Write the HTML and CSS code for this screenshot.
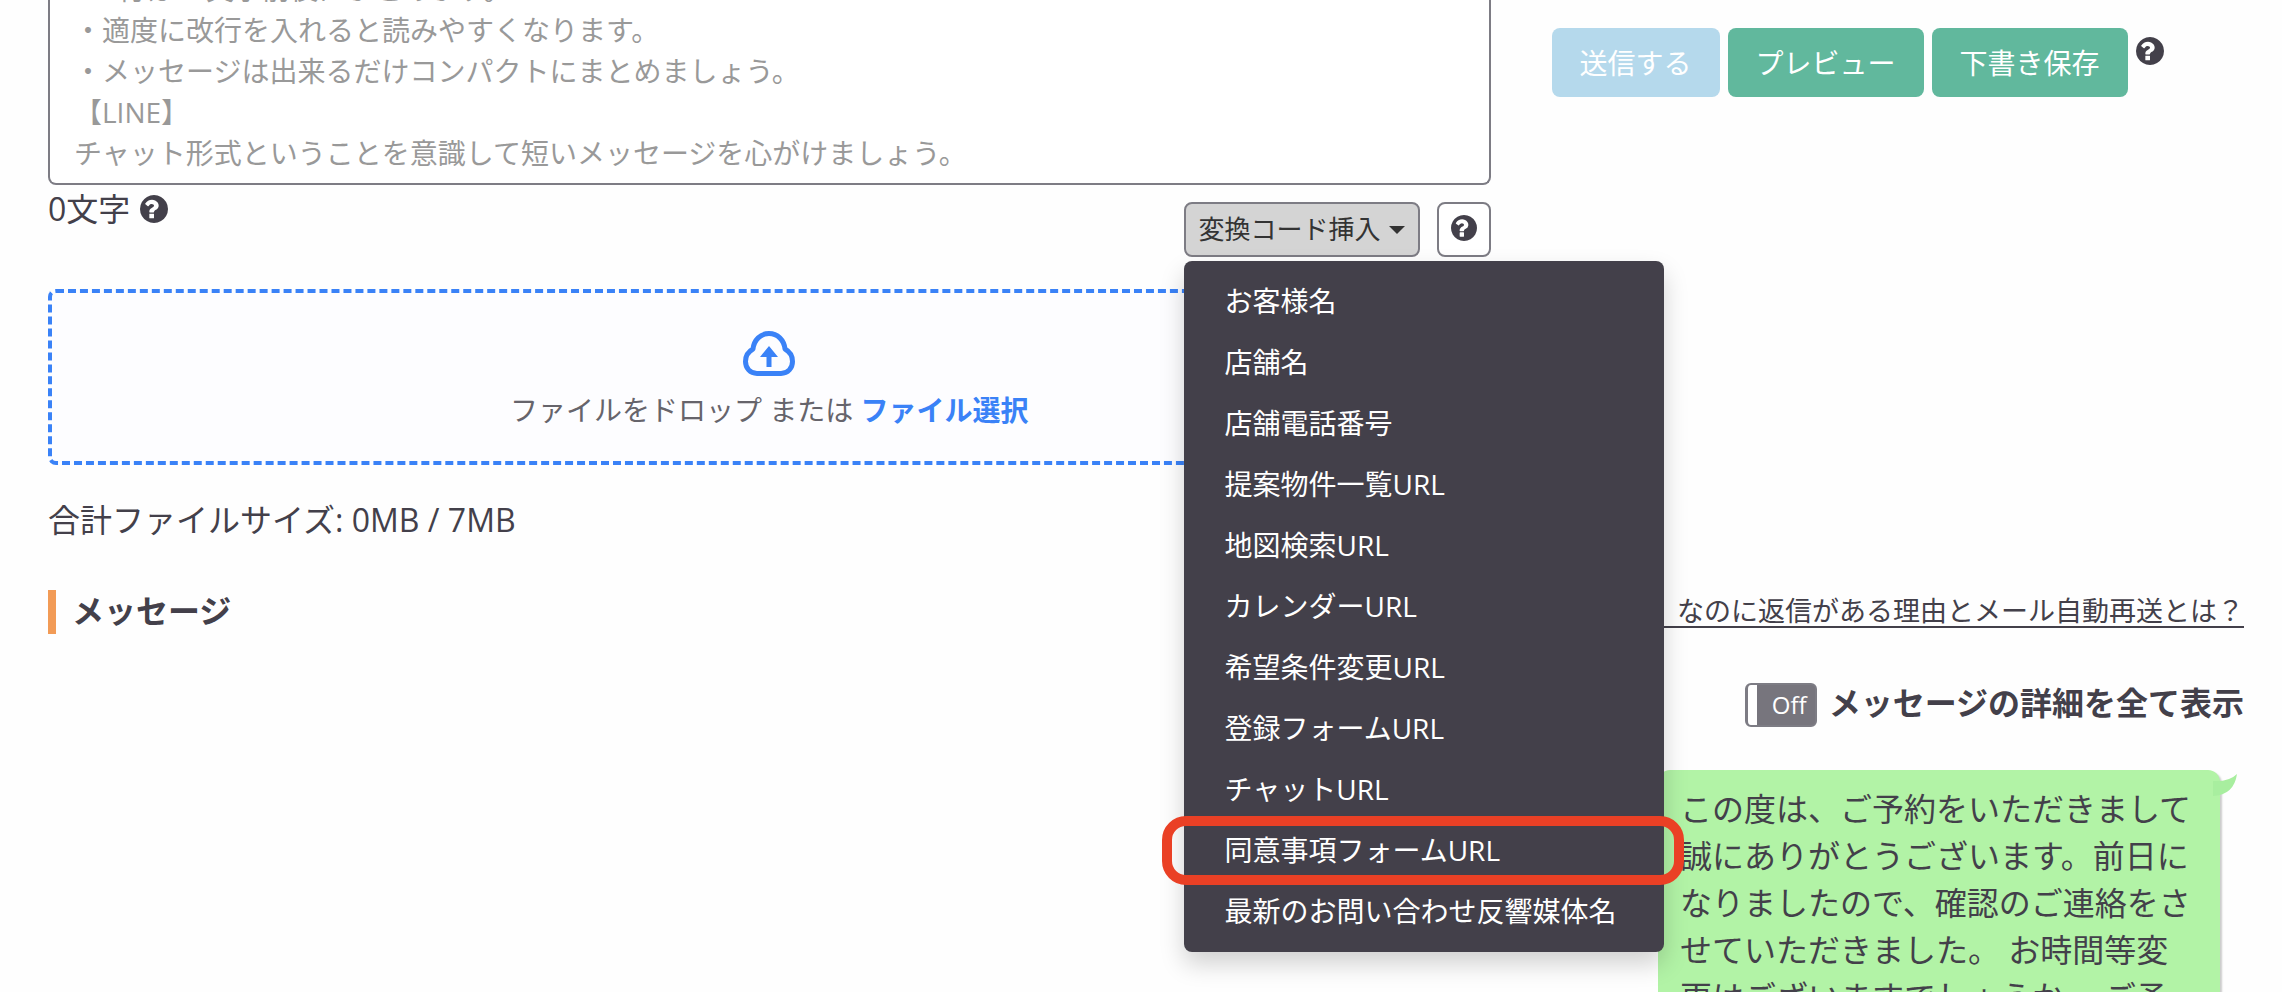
FILE: index.html
```
<!DOCTYPE html>
<html lang="ja">
<head>
    <meta charset="UTF-8">
    <meta name="viewport" content="width=device-width, initial-scale=1.0">
    <title>メッセージ</title>
    <link rel="stylesheet" href="styles.css">
</head>
<body>
    <svg class="sprite" aria-hidden="true">
        <symbol id="icon-help" viewBox="128 128 1536 1536">
            <path d="M896 1376v-192q0-14-9-23t-23-9h-192q-14 0-23 9t-9 23v192q0 14 9 23t23 9h192q14 0 23-9t9-23zM1152 704q0-88-55.5-163t-138.5-116-170-41q-243 0-371 213-15 24 8 42l132 100q7 6 19 6 16 0 25-12 53-68 86-92 34-24 86-24 48 0 85.5 26t37.5 59q0 38-20 61t-68 45q-63 28-115.5 86.5t-52.5 125.5v36q0 14 9 23t23 9h192q14 0 23-9t9-23q0-19 21.5-49.5t54.5-49.5q32-18 49-28.5t46-35 44.5-48 28-60.5 12.5-81zM1664 896q0 209-103 385.5t-279.5 279.5-385.5 103-385.5-103-279.5-279.5-103-385.5 103-385.5 279.5-279.5 385.5-103 385.5 103 279.5 279.5 103 385.5z"/>
        </symbol>
    </svg>

    <div class="compose">
        <div class="editor">
            <textarea class="message-input" rows="5" aria-label="本文" placeholder="・1行は20文字前後にまとめます。&#10;・適度に改行を入れると読みやすくなります。&#10;・メッセージは出来るだけコンパクトにまとめましょう。&#10;【LINE】&#10;チャット形式ということを意識して短いメッセージを心がけましょう。"></textarea>
            <div class="toolbar">
                <div class="counter">0文字 <svg class="icon"><use href="#icon-help"/></svg></div>
                <div class="tools">
                    <div class="dropdown">
                        <button class="tool dropdown-toggle" type="button" aria-expanded="true">変換コード挿入<span class="caret"></span></button>
                        <ul class="dropdown-menu">
                            <li><button type="button">お客様名</button></li>
                            <li><button type="button">店舗名</button></li>
                            <li><button type="button">店舗電話番号</button></li>
                            <li><button type="button">提案物件一覧URL</button></li>
                            <li><button type="button">地図検索URL</button></li>
                            <li><button type="button">カレンダーURL</button></li>
                            <li><button type="button">希望条件変更URL</button></li>
                            <li><button type="button">登録フォームURL</button></li>
                            <li><button type="button">チャットURL</button></li>
                            <li class="marked"><button type="button">同意事項フォームURL</button></li>
                            <li><button type="button">最新のお問い合わせ反響媒体名</button></li>
                        </ul>
                    </div>
                    <button class="tool help-btn" type="button" aria-label="ヘルプ"><svg class="icon"><use href="#icon-help"/></svg></button>
                </div>
            </div>
            <label class="dropzone">
                <input class="hidden-input" type="file" multiple>
                <svg class="cloud" viewBox="0 0 52 45">
                    <path d="M14 42.500C7 42.500 2.500 37 2.500 30.500C2.500 25 5.500 20.500 10 18C11 9 17.500 2.500 26 2.500S41 9 42 18C46.500 20.500 49.500 25 49.500 30.500C49.500 37 45 42.500 38 42.500Z" fill="none" stroke="currentColor" stroke-width="5" stroke-linejoin="round"/>
                    <path d="M26 15L35 26H28.500V36H23.500V26H17Z" fill="currentColor"/>
                </svg>
                <span>ファイルをドロップ または <b>ファイル選択</b></span>
            </label>
            <p class="total-size">合計ファイルサイズ: 0MB / 7MB</p>
        </div>
        <div class="actions">
            <button class="btn btn-send" type="button" disabled>送信する</button>
            <button class="btn" type="button">プレビュー</button>
            <button class="btn" type="button">下書き保存</button>
            <svg class="icon"><use href="#icon-help"/></svg>
        </div>
    </div>

    <div class="messages">
        <div class="messages-head">
            <h2>メッセージ</h2>
            <a href="#">なのに返信がある理由とメール自動再送とは？</a>
        </div>
        <label class="detail-toggle">
            <input class="hidden-input" type="checkbox">
            <span class="switch">Off</span>
            <span class="toggle-text">メッセージの詳細を全て表示</span>
        </label>
        <div class="bubble">
            この度は、ご予約をいただきまして誠にありがとうございます。前日になりましたので、確認のご連絡をさせていただきました。 お時間等変更はございますでしょうか。 ご予
            <svg class="tail" viewBox="0 0 24 24"><path d="M0 7Q16 8 24 0Q21 21 0 22Z"/></svg>
        </div>
    </div>
</body>
</html>
```
FILE: styles.css
```
* {
    box-sizing: border-box;
}
body {
    margin: 0;
    height: 100vh;
    overflow: hidden;
    padding: 0 38px 0 48px;
    font-family: "Open Sans", "Noto Sans CJK JP", sans-serif;
    font-size: 32px;
    line-height: 48px;
    color: #43404a;
    background: #fefefe;
}
button, textarea {
    font-family: inherit;
}
button {
    cursor: pointer;
}
.sprite {
    position: absolute;
    width: 0;
    height: 0;
}
.icon {
    width: 28px;
    height: 28px;
    fill: #43404a;
}
.hidden-input {
    position: absolute;
    opacity: 0;
    width: 1px;
    height: 1px;
}

/* compose area */
.compose {
    display: grid;
    grid-template-columns: 25fr 12fr;
    gap: 61px;
}
.message-input {
    display: block;
    width: 100%;
    margin-top: -31px;
    padding: 0 24px 9px;
    border: 2px solid #7d7c84;
    border-top: none;
    border-radius: 0 0 8px 8px;
    background: #fff;
    font-size: 28px;
    line-height: 41px;
    resize: none;
    overflow: hidden;
}
.message-input::placeholder {
    color: #999;
}
.toolbar {
    display: flex;
    justify-content: space-between;
}
.counter {
    display: flex;
    align-items: center;
    gap: 10px;
    height: 48px;
}
.tools {
    display: flex;
    gap: 17px;
    margin-top: 17px;
}
.tool {
    display: flex;
    align-items: center;
    justify-content: center;
    height: 55px;
    padding-bottom: 3px;
    border: 2px solid #7d7c84;
    border-radius: 8px;
    background: #fff;
    color: #333;
    font-size: 26px;
}
.dropdown {
    position: relative;
}
.dropdown-toggle {
    gap: 8px;
    padding: 0 13px 3px;
    background: #d4d4d4;
}
.caret {
    margin-top: 4px;
    border-top: 8px solid #333;
    border-left: 8px solid transparent;
    border-right: 8px solid transparent;
}
.help-btn {
    width: 54px;
    padding: 0 0 3px;
}
.help-btn .icon {
    width: 26px;
    height: 26px;
}
.dropdown-menu {
    position: absolute;
    top: 59px;
    left: 0;
    z-index: 10;
    min-width: 480px;
    margin: 0;
    padding: 8px 0 12px;
    list-style: none;
    background: #43404a;
    border-radius: 8px;
    box-shadow: 0 12px 24px rgba(0, 0, 0, 0.18);
}
.dropdown-menu button {
    display: block;
    width: 100%;
    height: 61px;
    padding: 0 41px;
    border: none;
    background: none;
    color: #fff;
    font-size: 28px;
    text-align: left;
    white-space: nowrap;
}
.marked {
    position: relative;
}
.marked::after {
    content: "";
    position: absolute;
    inset: -2px -20px -6px -22px;
    border: 10px solid #ea4025;
    border-radius: 24px;
    pointer-events: none;
}
.dropzone {
    display: flex;
    flex-direction: column;
    align-items: center;
    gap: 10px;
    height: 176px;
    margin-top: 32px;
    padding-top: 38px;
    border: 4px dashed #3a82f7;
    border-radius: 8px;
    background: #fdfdff;
    color: #66646b;
    font-size: 28px;
}
.dropzone b {
    color: #3a82f7;
}
.cloud {
    width: 52px;
    height: 45px;
    color: #3a82f7;
}
.total-size {
    margin: 31px 0 0;
}
.actions {
    display: flex;
    align-items: flex-start;
    gap: 8px;
    padding-top: 28px;
}
.actions .icon {
    margin-top: 9px;
}
.btn {
    height: 69px;
    padding: 0 28px 2px;
    border: none;
    border-radius: 8px;
    background: #61b89d;
    color: #fff;
    font-size: 28px;
    white-space: nowrap;
}
.btn-send {
    background: #b5d9ec;
}

/* message list */
.messages {
    display: flex;
    flex-direction: column;
    margin-top: 46px;
}
.messages-head {
    display: flex;
    justify-content: space-between;
    align-items: center;
    height: 44px;
}
.messages-head h2 {
    height: 44px;
    margin: 0;
    padding-left: 16px;
    border-left: 8px solid #f29b56;
    font-size: 32px;
    line-height: 42px;
}
.messages-head a {
    padding-left: 16px;
    border-bottom: 2px solid #43404a;
    color: inherit;
    font-size: 27px;
    line-height: 30px;
    text-decoration: none;
}
.detail-toggle {
    display: flex;
    align-self: flex-end;
    gap: 12px;
    height: 44px;
    margin-top: 49px;
    font-weight: bold;
}
.toggle-text {
    line-height: 40px;
}
.switch {
    width: 72px;
    height: 44px;
    padding-right: 8px;
    border: 2px solid #7d7c84;
    border-left-width: 3px;
    border-radius: 6px;
    background: linear-gradient(to right, #fff 9px, #77757d 9px);
    color: #fff;
    font-size: 24px;
    font-weight: normal;
    line-height: 40px;
    text-align: right;
}
.bubble {
    position: relative;
    align-self: flex-end;
    width: 562px;
    margin: 43px 24px 0 0;
    padding: 15px 22px;
    border-radius: 12px;
    background: #b2f3a6;
    box-shadow: 2px 2px 2px rgba(0, 0, 0, 0.2);
    line-height: 47px;
}
.tail {
    position: absolute;
    top: 4px;
    right: -17px;
    width: 24px;
    height: 24px;
    fill: #a8ee9f;
}
```
